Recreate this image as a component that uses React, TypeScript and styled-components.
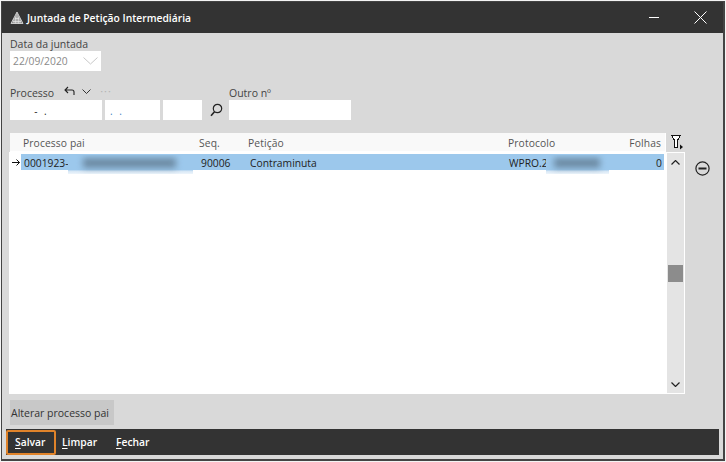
import React from "react";
import styled, { createGlobalStyle } from "styled-components";

const GlobalStyle = createGlobalStyle`
  html, body { margin: 0; padding: 0; background: #f4f4f4; }
  body { font-family: "Open Sans", "Noto Sans", "Liberation Sans", sans-serif; font-size: 10.5px; color: #333; }
`;

const Window = styled.div`
  width: 724px;
  height: 460px;
  margin: 1px 0 0 1px;
  box-sizing: border-box;
  border: 1px solid #444;
  border-right-width: 2px;
  border-bottom-width: 2px;
  background: #d9d9d9;
  display: flex;
  flex-direction: column;
`;

const TitleBar = styled.header`
  height: 31px;
  flex: none;
  background: #333;
  display: flex;
  align-items: center;
  padding-left: 8px;
  color: #fff;
  font-weight: 600;
  font-size: 10.3px;
  gap: 3px;
`;

const WindowButtons = styled.div`
  margin-left: auto;
  display: flex;
  align-items: center;
  gap: 35px;
  padding-right: 16px;
`;

const Form = styled.section`
  height: 99px;
  flex: none;
  box-sizing: border-box;
  padding: 5px 0 0 8px;
`;

const Label = styled.label`
  display: block;
  font-size: 10.5px;
  line-height: 13px;
  color: #444;
`;

const DateBox = styled.div`
  width: 91px;
  height: 20px;
  background: #fff;
  display: flex;
  align-items: center;
  justify-content: space-between;
  padding: 0 3px;
  box-sizing: border-box;
  color: #8a8a8a;
  font-size: 10.3px;
`;

const ProcessRow = styled.div`
  display: flex;
  align-items: flex-end;
  margin-top: 15px;
`;

const Field = styled.div<{ $width: number; $blue?: boolean }>`
  width: ${(p) => p.$width}px;
  height: 20px;
  background: #fff;
  margin-right: 3px;
  box-sizing: border-box;
  padding: 2px 0 0 ${(p) => (p.$blue ? 5 : 15)}px;
  color: ${(p) => (p.$blue ? "#3d7fc4" : "#222")};
  font-size: 10px;
  line-height: 18px;
  letter-spacing: 2px;
  white-space: pre;
`;

const ProcessColumn = styled.div`
  display: flex;
  flex-direction: column;
`;

const ProcessHead = styled.div`
  display: flex;
  align-items: center;
  height: 14px;
`;

const ProcessFields = styled.div`
  display: flex;
`;

const HeadIcons = styled.div`
  display: flex;
  align-items: center;
  margin: -4px 0 0 10px;
  gap: 7px;
`;

const Dots = styled.span`
  color: #b4b4b4;
  font-size: 11px;
  line-height: 8px;
  margin-left: 2px;
  letter-spacing: 1px;
`;

const SearchSlot = styled.div`
  width: 25px;
  height: 20px;
  display: flex;
  align-items: center;
  justify-content: center;
  margin-left: -1px;
`;

const GridArea = styled.section`
  height: 263px;
  flex: none;
  display: flex;
  padding-left: 7px;
`;

const Grid = styled.div`
  width: 676px;
  height: 262px;
  background: #fff;
  display: flex;
  flex-direction: column;
  position: relative;
`;

const GridHead = styled.div`
  height: 20px;
  flex: none;
  background: #d9d9d9;
  padding: 1px 0 0 1px;
  box-sizing: border-box;
`;

const HeadTop = styled.div`
  display: flex;
  height: 19px;
  background: #fff;
  justify-content: space-between;
`;

const HeadRow = styled.div`
  display: grid;
  grid-template-columns: 13px 176px 49px 260px 100px 55px;
  height: 18px;
  width: 655px;
  background: #f9f9f9;
  align-items: center;
  padding-top: 2px;
  box-sizing: border-box;
  color: #555;
  font-size: 10.3px;
  letter-spacing: 0.1px;
`;

const FilterSlot = styled.div`
  width: 19px;
  height: 20px;
  background: #d9d9d9;
  margin-top: -1px;
  padding: 2px 0 0 5px;
  box-sizing: border-box;
`;

const Cell = styled.div<{ $right?: boolean }>`
  text-align: ${(p) => (p.$right ? "right" : "left")};
  padding-right: ${(p) => (p.$right ? 2 : 0)}px;
  white-space: nowrap;
`;

const GridBody = styled.div`
  flex: 1;
  display: flex;
  padding-left: 1px;
  min-height: 0;
`;

const Rows = styled.div`
  flex: 1;
  display: flex;
  flex-direction: column;
  padding-top: 2px;
`;

const Row = styled.div`
  display: grid;
  grid-template-columns: 11px 177px 49px 259px 100px 58px;
  height: 16px;
  width: 654px;
  align-items: center;
  color: #222;
  font-size: 10.3px;
`;

const Arrow = styled.div`
  display: flex;
  align-items: center;
  padding-left: 2px;
`;

const SelectedCell = styled(Cell)`
  background: #9cc8ec;
  height: 16px;
  line-height: 18px;
  padding-left: ${(p) => (p.$right ? 0 : 3)}px;
`;

const Smudge = styled.div<{ $left: number; $width: number }>`
  position: absolute;
  top: 23px;
  left: ${(p) => p.$left}px;
  width: ${(p) => p.$width}px;
  height: 19px;
  background: linear-gradient(180deg, #9cc8ec 0%, #9cc8ec 78%, #d5e6f5 84%, #eef5fb 100%);
  overflow: hidden;
  &::after {
    content: "";
    position: absolute;
    left: 12%;
    right: 14%;
    top: 3px;
    height: 10px;
    background: #6d8ba4;
    filter: blur(3px);
  }
`;

const ScrollBar = styled.div`
  width: 17px;
  flex: none;
  background: #e4e4e4;
  margin: 1px 1px 1px 0;
  position: relative;
  display: flex;
  flex-direction: column;
  justify-content: space-between;
  align-items: center;
  padding: 7px 0 6px;
  box-sizing: border-box;
`;

const Thumb = styled.div`
  position: absolute;
  top: 112px;
  left: 1px;
  width: 15px;
  height: 17px;
  background: #8c8c8c;
`;

const SideTools = styled.div`
  padding: 29px 0 0 10px;
`;

const ActionRow = styled.div`
  height: 34px;
  flex: none;
  padding: 5px 0 0 8px;
  box-sizing: border-box;
`;

const GrayButton = styled.button`
  width: 104px;
  height: 25px;
  border: 0;
  padding: 0 0 0 1px;
  text-align: left;
  background: #c8c8c8;
  color: #333;
  font: inherit;
  font-size: 10.5px;
`;

const Footer = styled.footer`
  margin-left: 4px;
  width: 713px;
  height: 26px;
  flex: none;
  background: #333;
  display: flex;
  align-items: center;
`;

const FooterButton = styled.button<{ $focused?: boolean }>`
  height: 25px;
  box-sizing: border-box;
  background: none;
  color: #fff;
  border: ${(p) => (p.$focused ? "2px solid #e0832a" : "2px solid transparent")};
  border-radius: 2px;
  font: inherit;
  font-size: 10.3px;
  font-weight: 600;
  padding: 0 0 0 ${(p) => (p.$focused ? 7 : 4)}px;
  text-align: left;
  width: ${(p) => (p.$focused ? 50 : 54)}px;
  & u { text-underline-offset: 2px; }
`;

export default function App() {
  return (
    <>
      <GlobalStyle />
      <Window>
        <TitleBar>
          <svg width="14" height="14" viewBox="0 0 14 14">
            <path d="M7 1 L13 12.5 L1 12.5 Z" fill="#8c8c8c" stroke="#e4e4e4" strokeWidth="0.8" />
            <path d="M7 2.5 V12.5 M5.5 5.5 V12.5 M8.5 5.5 V12.5 M4 8 V12.5 M10 8 V12.5 M3 10.5 H11 M4.5 7.5 H9.5" stroke="#e8e8e8" strokeWidth="0.7" />
          </svg>
          Juntada de Petição Intermediária
          <WindowButtons>
            <svg width="10" height="3" viewBox="0 0 10 3"><path d="M0 1.5 H10" stroke="#fff" strokeWidth="1" /></svg>
            <svg width="13" height="13" viewBox="0 0 13 13"><path d="M.5 .5 L12.5 12.5 M12.5 .5 L.5 12.5" stroke="#fff" strokeWidth="1" /></svg>
          </WindowButtons>
        </TitleBar>

        <Form>
          <Label>Data da juntada</Label>
          <DateBox>
            22/09/2020
            <svg width="15" height="8" viewBox="0 0 15 8"><path d="M.5 .5 L7.5 7 L14.5 .5" fill="none" stroke="#c8c8c8" strokeWidth="1" /></svg>
          </DateBox>
          <ProcessRow>
            <ProcessColumn>
              <ProcessHead>
                <Label>Processo</Label>
                <HeadIcons>
                  <svg width="11" height="10" viewBox="0 0 11 10"><path d="M4 1 L1 4 L4 7 M1 4 H8 Q10 4 10 6 V9" fill="none" stroke="#222" strokeWidth="1.1" /></svg>
                  <svg width="9" height="5" viewBox="0 0 9 5"><path d="M.5 .5 L4.5 4.5 L8.5 .5" fill="none" stroke="#222" strokeWidth="0.9" /></svg>
                  <Dots>···</Dots>
                </HeadIcons>
              </ProcessHead>
              <ProcessFields>
                <Field $width={92}>{"  - ."}</Field>
                <Field $width={55} $blue>{". ."}</Field>
                <Field $width={39} />
              </ProcessFields>
            </ProcessColumn>
            <SearchSlot>
              <svg width="13" height="14" viewBox="0 0 13 14"><circle cx="7.5" cy="5.5" r="4.2" fill="none" stroke="#222" strokeWidth="1.2" /><path d="M4.5 8.8 L1 12.8" stroke="#222" strokeWidth="1.6" /></svg>
            </SearchSlot>
            <ProcessColumn>
              <ProcessHead><Label>Outro nº</Label></ProcessHead>
              <Field $width={122} />
            </ProcessColumn>
          </ProcessRow>
        </Form>

        <GridArea>
          <Grid>
            <GridHead>
              <HeadTop>
                <HeadRow>
                  <span />
                  <Cell>Processo pai</Cell>
                  <Cell>Seq.</Cell>
                  <Cell>Petição</Cell>
                  <Cell>Protocolo</Cell>
                  <Cell $right>Folhas</Cell>
                </HeadRow>
                <FilterSlot>
                  <svg width="13" height="16" viewBox="0 0 13 16">
                    <path d="M.5 1 H9.5 L6.5 6.5 V13.5 L3.5 13.5 V6.5 Z" fill="#fff" stroke="#111" strokeWidth="1" shapeRendering="crispEdges" />
                    <path d="M9 10.5 L12 13 L9 15.5 Z" fill="#111" />
                  </svg>
                </FilterSlot>
              </HeadTop>
            </GridHead>
            <GridBody>
              <Rows>
                <Row>
                  <Arrow>
                    <svg width="8" height="7" viewBox="0 0 8 7"><path d="M0 3.5 H7.5 M4.5 .5 L7.5 3.5 L4.5 6.5" fill="none" stroke="#111" strokeWidth="1" /></svg>
                  </Arrow>
                  <SelectedCell>0001923-</SelectedCell>
                  <SelectedCell>90006</SelectedCell>
                  <SelectedCell>Contraminuta</SelectedCell>
                  <SelectedCell>WPRO.2</SelectedCell>
                  <SelectedCell $right>0</SelectedCell>
                </Row>
              </Rows>
              <ScrollBar>
                <svg width="9" height="5" viewBox="0 0 9 5"><path d="M.5 4.5 L4.5 .5 L8.5 4.5" fill="none" stroke="#222" strokeWidth="1.2" /></svg>
                <Thumb />
                <svg width="9" height="5" viewBox="0 0 9 5"><path d="M.5 .5 L4.5 4.5 L8.5 .5" fill="none" stroke="#222" strokeWidth="1.2" /></svg>
              </ScrollBar>
            </GridBody>
            <Smudge $left={59} $width={125} />
            <Smudge $left={537} $width={63} />
          </Grid>
          <SideTools>
            <svg width="15" height="15" viewBox="0 0 15 15">
              <circle cx="7.5" cy="7.5" r="6.6" fill="none" stroke="#222" strokeWidth="1.2" />
              <path d="M3.5 7.5 H11.5" stroke="#222" strokeWidth="2" />
            </svg>
          </SideTools>
        </GridArea>

        <ActionRow>
          <GrayButton>Alterar processo pai</GrayButton>
        </ActionRow>

        <Footer>
          <FooterButton $focused><u>S</u>alvar</FooterButton>
          <FooterButton><u>L</u>impar</FooterButton>
          <FooterButton><u>F</u>echar</FooterButton>
        </Footer>
      </Window>
    </>
  );
}
